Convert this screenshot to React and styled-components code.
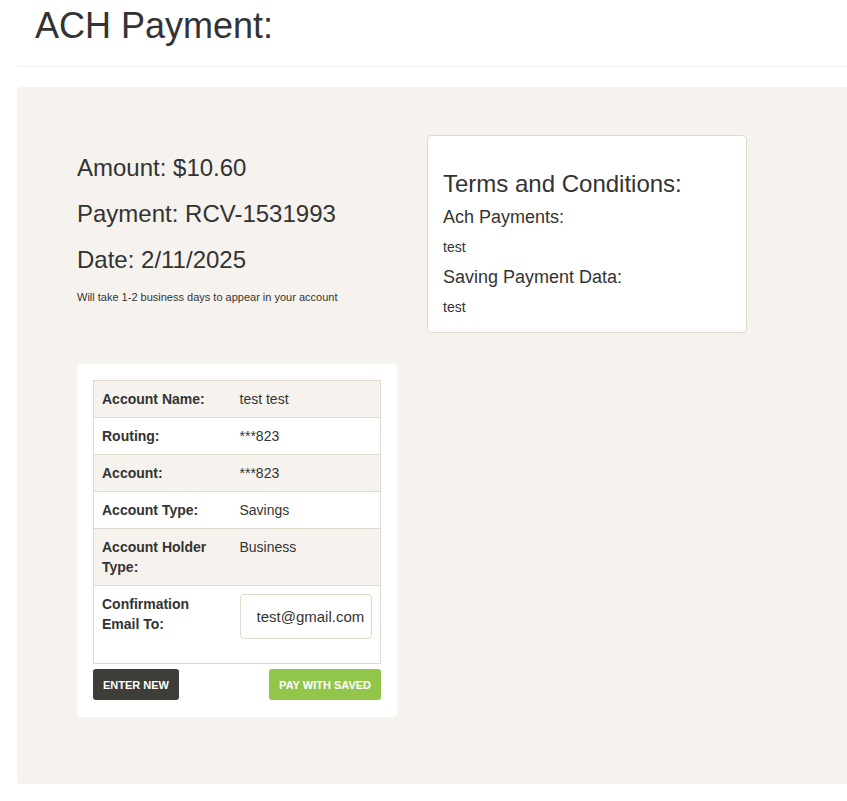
import React from "react";
import styled, { createGlobalStyle } from "styled-components";

const Global = createGlobalStyle`
  html, body { margin: 0; padding: 0; background: #fff; overflow-x: hidden; }
  body { font-family: "Liberation Sans", Arial, sans-serif; color: #333; font-size: 14px; line-height: 20px; }
  * { box-sizing: border-box; }
`;

const Page = styled.div`
  padding-left: 17px;
  width: 870px;
`;

const Header = styled.header`
  padding: 6px 0 20px 18px;
  border-bottom: 1px solid #f3f0ea;
`;

const Title = styled.h1`
  margin: 0;
  font-size: 36px;
  line-height: 40px;
  font-weight: 400;
  color: #333;
`;

const Panel = styled.main`
  margin-top: 20px;
  background: #f6f3ee;
  border-radius: 4px;
  padding: 48px 60px 67px;
  display: grid;
  grid-template-columns: 320px 320px;
  column-gap: 30px;
  align-items: start;
`;

const LeftCol = styled.section`
  display: flex;
  flex-direction: column;
`;

const Info = styled.h3`
  margin: ${(p) => (p.$first ? "20px" : "0")} 0 20px;
  font-size: 24px;
  line-height: 26px;
  font-weight: 400;
  color: #333;
  &:last-of-type { margin-bottom: 10px; }
`;

const Note = styled.p`
  margin: 4px 0 0;
  font-size: 11px;
  line-height: 20px;
`;

const Card = styled.div`
  margin-top: 57px;
  background: #fff;
  border-radius: 4px;
  padding: 16px 16px 17px;
`;

const Table = styled.table`
  width: 100%;
  table-layout: fixed;
  border-collapse: collapse;
  border: 1px solid #e0d9cd;
`;

const Row = styled.tr`
  background: ${(p) => (p.$striped ? "#f6f3ee" : "#fff")};
  border-top: 1px solid #e0d9cd;
`;

const Label = styled.th`
  width: 138px;
  text-align: left;
  vertical-align: top;
  padding: 8px;
  font-weight: 700;
  font-size: 14px;
  line-height: 20px;
`;

const Value = styled.td`
  vertical-align: top;
  padding: 8px;
  font-size: 14px;
  line-height: 20px;
`;

const EmailInput = styled.input`
  display: block;
  width: 100%;
  height: 45px;
  margin-bottom: 16px;
  padding: 0 2px 0 16px;
  font-family: "Liberation Sans", Arial, sans-serif;
  font-size: 15px;
  color: #333;
  border: 1px solid #e0d9cd;
  border-radius: 4px;
  background: #fff;
  outline: none;
`;

const Actions = styled.div`
  display: flex;
  justify-content: space-between;
  margin-top: 5px;
`;

const Button = styled.button`
  height: 31px;
  padding: 0 10px;
  border: none;
  border-radius: 3px;
  font-family: "Liberation Sans", Arial, sans-serif;
  font-size: 11px;
  font-weight: 700;
  text-transform: uppercase;
  color: #fff;
  background: ${(p) => (p.$variant === "green" ? "#92c64b" : "#3e3e39")};
  cursor: pointer;
`;

const Terms = styled.aside`
  background: #fff;
  border: 1px solid #e0d9cd;
  border-radius: 4px;
  padding: 15px;
  width: 320px;
`;

const TermsTitle = styled.h3`
  margin: 20px 0 10px;
  font-size: 24px;
  line-height: 26px;
  font-weight: 400;
`;

const TermsSub = styled.h4`
  margin: 0 0 10px;
  font-size: 18px;
  line-height: 20px;
  font-weight: 400;
`;

const TermsText = styled.p`
  margin: 0 0 ${(p) => (p.$last ? "0" : "10px")};
  font-size: 14px;
  line-height: 20px;
`;

const rows = [
  ["Account Name:", "test test"],
  ["Routing:", "***823"],
  ["Account:", "***823"],
  ["Account Type:", "Savings"],
  ["Account Holder Type:", "Business"],
];

export default function App() {
  return (
    <>
      <Global />
      <Page>
        <Header>
          <Title>ACH Payment:</Title>
        </Header>
        <Panel>
          <LeftCol>
            <Info $first>Amount: $10.60</Info>
            <Info>Payment: RCV-1531993</Info>
            <Info>Date: 2/11/2025</Info>
            <Note>Will take 1-2 business days to appear in your account</Note>
            <Card>
              <Table>
                <tbody>
                  {rows.map(([l, v], i) => (
                    <Row key={l} $striped={i % 2 === 0}>
                      <Label>{l}</Label>
                      <Value>{v}</Value>
                    </Row>
                  ))}
                  <Row>
                    <Label>Confirmation Email To:</Label>
                    <Value>
                      <EmailInput defaultValue="test@gmail.com" />
                    </Value>
                  </Row>
                </tbody>
              </Table>
              <Actions>
                <Button>Enter New</Button>
                <Button $variant="green">Pay With Saved</Button>
              </Actions>
            </Card>
          </LeftCol>
          <Terms>
            <TermsTitle>Terms and Conditions:</TermsTitle>
            <TermsSub>Ach Payments:</TermsSub>
            <TermsText>test</TermsText>
            <TermsSub>Saving Payment Data:</TermsSub>
            <TermsText $last>test</TermsText>
          </Terms>
        </Panel>
      </Page>
    </>
  );
}
